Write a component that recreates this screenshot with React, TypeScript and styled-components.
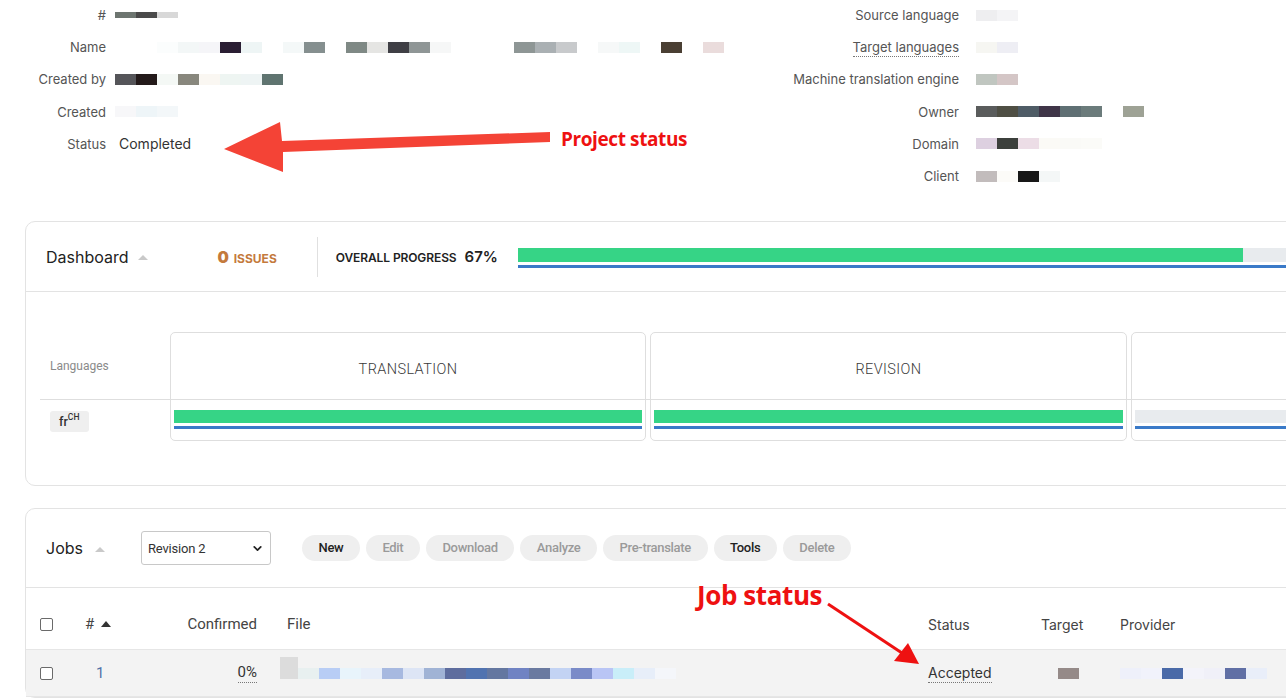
import React from 'react';
import styled, { createGlobalStyle } from 'styled-components';
import { ChevronDown } from 'lucide-react';

const GlobalStyle = createGlobalStyle`
  html, body {
    margin: 0;
    padding: 0;
    background: #fff;
    overflow: hidden;
  }
  body {
    font-family: Inter, "Noto Sans", sans-serif;
    color: #333;
  }
`;

interface PixelsProps {
  colors: string[];
  w?: number;
  h?: number;
}

// censored values in the screenshot, drawn as a strip of flat blocks
function Pixels({ colors, w = 21, h = 11 }: PixelsProps) {
  return (
    <StyledPixels>
      {colors.map((c, i) => (
        <StyledPixel key={i} $c={c} $w={w} $h={h} />
      ))}
    </StyledPixels>
  );
}

const leftInfo: { label: string; colors?: string[]; h?: number; text?: string }[] = [
  { label: '#', colors: ['#6d7570', '#4a4a4a', '#d8d8d8'], h: 6 },
  {
    label: 'Name',
    colors: ['#fff', '#fff', '#fbfdfd', '#f3f7f7', '#f5f5f8', '#2a1e33', '#eef5f5', '#fff', '#f4f8f8', '#858f8f', '#fff', '#7f8985', '#e5e5e3', '#3f3f45', '#8f9696', '#f6f7f7', '#fff', '#fff', '#fff', '#8e9695', '#aab0b3', '#c8cacc', '#fff', '#f6f8f8', '#eef7f6', '#fff', '#4a3f33', '#fff', '#eadcdc'],
  },
  { label: 'Created by', colors: ['#555559', '#231a1a', '#f4f8f5', '#88877d', '#faf7f2', '#eef5f2', '#eef4f4', '#5f7470'] },
  { label: 'Created', colors: ['#f7f7f9', '#eef5f8', '#f3f7f9'] },
  { label: 'Status', text: 'Completed' },
];

const rightInfo: { label: string; colors: string[]; dotted?: boolean }[] = [
  { label: 'Source language', colors: ['#eeeef0', '#f4f4f6'] },
  { label: 'Target languages', colors: ['#f6f6f2', '#eeeef4'], dotted: true },
  { label: 'Machine translation engine', colors: ['#c0c6c0', '#d4c6c6'] },
  { label: 'Owner', colors: ['#5a5c5c', '#4f4f44', '#4f5c66', '#3f3548', '#5f6f73', '#6b7b7b', '#fff', '#9ea295'] },
  { label: 'Domain', colors: ['#ddd0e0', '#3c403c', '#ecdde6', '#fbfaf6', '#fafaf7', '#fbfbf8'] },
  { label: 'Client', colors: ['#c2bcbc', '#fcfbf8', '#181818', '#f4f7f7'] },
];

const stages = ['TRANSLATION', 'REVISION', ''];

const buttons: { label: string; active: boolean }[] = [
  { label: 'New', active: true },
  { label: 'Edit', active: false },
  { label: 'Download', active: false },
  { label: 'Analyze', active: false },
  { label: 'Pre-translate', active: false },
  { label: 'Tools', active: true },
  { label: 'Delete', active: false },
];

const fileColors = ['#e8f0f0', '#b8cdf5', '#e8f4fb', '#e7eef9', '#a7b9e0', '#dde5f5', '#a0b3d5', '#5e6d9e', '#5173b0', '#6477a0', '#7083c3', '#6a7aa0', '#c3d3f3', '#7a8bc8', '#b9c5f5', '#c9eef9', '#e7eef9', '#f4f6fa'];
const providerColors = ['#eef0fa', '#f1f2fb', '#4a6aa8', '#f3f3fa', '#f0f0f8', '#606fa5', '#e9eef9'];

export default function App() {
  return (
    <StyledPage>
      <GlobalStyle />

      <StyledTop>
        <StyledInfoLeft>
          {leftInfo.map((row) => (
            <React.Fragment key={row.label}>
              <StyledLabel>{row.label}</StyledLabel>
              {row.text ? (
                <StyledValue>{row.text}</StyledValue>
              ) : (
                <Pixels colors={row.colors || []} h={row.h} />
              )}
            </React.Fragment>
          ))}
        </StyledInfoLeft>
        <StyledInfoRight>
          {rightInfo.map((row) => (
            <React.Fragment key={row.label}>
              <StyledLabel>
                {row.dotted ? <StyledDotted>{row.label}</StyledDotted> : row.label}
              </StyledLabel>
              <Pixels colors={row.colors} />
            </React.Fragment>
          ))}
        </StyledInfoRight>
      </StyledTop>

      <StyledCard>
        <StyledDashHeader>
          <StyledCardTitle>Dashboard</StyledCardTitle>
          <StyledCaret $gap={9} />
          <StyledIssues>
            <b>0</b> ISSUES
          </StyledIssues>
          <StyledVDivider />
          <StyledOverall>OVERALL PROGRESS</StyledOverall>
          <StyledPercent>67%</StyledPercent>
          <StyledProgress>
            <StyledTrack $height={14}>
              <StyledFill style={{ width: 725 }} />
            </StyledTrack>
            <StyledBlueLine />
          </StyledProgress>
        </StyledDashHeader>

        <StyledDashBody>
          <StyledStageGrid>
            <StyledLangColumn>
              <StyledLangHead>Languages</StyledLangHead>
              <StyledLangRow>
                <StyledLangTag>
                  fr<sup>CH</sup>
                </StyledLangTag>
              </StyledLangRow>
            </StyledLangColumn>
            {stages.map((s, i) => (
              <StyledStage key={i}>
                <StyledStageHead>{s}</StyledStageHead>
                <StyledStageBars>
                  <StyledTrack $height={13}>
                    <StyledFill style={{ width: s ? '100%' : '0%' }} />
                  </StyledTrack>
                  <StyledBlueLine />
                </StyledStageBars>
              </StyledStage>
            ))}
          </StyledStageGrid>
        </StyledDashBody>
      </StyledCard>

      <StyledJobsCard>
        <StyledJobsHeader>
          <StyledCardTitle>Jobs</StyledCardTitle>
          <StyledCaret $gap={12} />
          <StyledSelect>
            Revision 2
            <ChevronDown size={13} strokeWidth={3.2} color="#222" />
          </StyledSelect>
          <StyledToolbar>
            {buttons.map((b) => (
              <StyledPill key={b.label} $active={b.active}>
                {b.label}
              </StyledPill>
            ))}
          </StyledToolbar>
        </StyledJobsHeader>

        <StyledHeadRow>
          <StyledCell>
            <StyledCheck />
          </StyledCell>
          <StyledCell $condensed>
            # <StyledSortCaret />
          </StyledCell>
          <StyledCell $condensed $right>
            Confirmed
          </StyledCell>
          <StyledCell $condensed $pad={30}>
            File
          </StyledCell>
          <StyledCell>Status</StyledCell>
          <StyledCell>Target</StyledCell>
          <StyledCell>Provider</StyledCell>
        </StyledHeadRow>

        <StyledJobRow>
          <StyledCell>
            <StyledCheck />
          </StyledCell>
          <StyledCell $condensed $pad={11}>
            <StyledLink>1</StyledLink>
          </StyledCell>
          <StyledCell $condensed $right>
            <StyledDotted>0%</StyledDotted>
          </StyledCell>
          <StyledCell $pad={23}>
            <StyledFileThumb />
            <Pixels colors={fileColors} />
          </StyledCell>
          <StyledCell>
            <StyledDotted>Accepted</StyledDotted>
          </StyledCell>
          <StyledCell $pad={17}>
            <Pixels colors={['#958a88']} />
          </StyledCell>
          <StyledCell>
            <Pixels colors={providerColors} />
          </StyledCell>
        </StyledJobRow>
      </StyledJobsCard>

      <StyledOverlay width={1286} height={700} viewBox="0 0 1286 700">
        <polygon
          points="224,150 280,123 282,142 550,133 550,143 283,153 283,173"
          fill="#f44336"
        />
        <line x1={828} y1={605} x2={905} y2={656} stroke="#ee1111" strokeWidth={3} />
        <polygon points="919,665 894,662 908,644" fill="#ee1111" />
      </StyledOverlay>
      <StyledNote $x={561} $y={127} $size={19}>
        Project status
      </StyledNote>
      <StyledNote $x={697} $y={578} $size={26}>
        Job status
      </StyledNote>
    </StyledPage>
  );
}

const StyledPage = styled.div`
  position: relative;
  width: 1640px;
  height: 700px;
`;

const StyledTop = styled.div`
  display: flex;
  margin-top: -1px;
`;

const StyledInfoLeft = styled.div`
  width: 780px;
  display: grid;
  grid-template-columns: 106px 1fr;
  grid-auto-rows: 32.2px;
  column-gap: 9px;
  align-items: center;
  align-content: start;
`;

const StyledInfoRight = styled.div`
  display: grid;
  grid-template-columns: 179px 1fr;
  grid-auto-rows: 32.2px;
  column-gap: 17px;
  align-items: center;
  align-content: start;
`;

const StyledLabel = styled.div`
  text-align: right;
  font-size: 13px;
  color: #555;
`;

const StyledValue = styled.div`
  font-size: 14px;
  color: #333;
  padding-left: 4px;
`;

const StyledDotted = styled.span`
  border-bottom: 1px dotted #777;
  padding-bottom: 1px;
`;

const StyledPixels = styled.div`
  display: flex;
  align-items: center;
`;

const StyledPixel = styled.span<{ $c: string; $w: number; $h: number }>`
  display: block;
  width: ${(p) => p.$w}px;
  height: ${(p) => p.$h}px;
  background: ${(p) => p.$c};
`;

const StyledCard = styled.div`
  margin: 29px 0 0 25px;
  border: 1px solid #e3e3e3;
  border-radius: 10px;
  background: #fff;
`;

const StyledDashHeader = styled.div`
  display: flex;
  align-items: center;
  height: 69px;
  padding: 0 20px;
  border-bottom: 1px solid #e3e3e3;
`;

const StyledCardTitle = styled.div`
  font-size: 16px;
  color: #222;
`;

const StyledCaret = styled.span<{ $gap: number }>`
  width: 0;
  height: 0;
  margin: 2px 0 0 ${(p) => p.$gap}px;
  border-left: 5px solid transparent;
  border-right: 5px solid transparent;
  border-bottom: 5px solid #c9c9c9;
`;

const StyledIssues = styled.div`
  margin-left: 70px;
  color: #c47a3c;
  font-size: 12px;
  font-weight: 700;

  b {
    font-size: 16px;
    margin-right: 2px;
  }
`;

const StyledVDivider = styled.div`
  width: 1px;
  height: 40px;
  background: #e0e0e0;
  margin-left: 40px;
`;

const StyledOverall = styled.div`
  margin-left: 18px;
  margin-top: 2px;
  font-size: 12px;
  font-weight: 600;
  color: #222;
  letter-spacing: -0.1px;
`;

const StyledPercent = styled.div`
  margin-left: 8px;
  font-size: 15px;
  font-weight: 600;
  color: #222;
`;

const StyledProgress = styled.div`
  flex: 1;
  margin-left: 20px;
  margin-top: 2px;
`;

const StyledTrack = styled.div<{ $height: number }>`
  height: ${(p) => p.$height}px;
  background: #e8ebee;
`;

const StyledFill = styled.div`
  height: 100%;
  background: #36d486;
`;

const StyledBlueLine = styled.div`
  height: 3px;
  margin-top: 3px;
  background: #3a7ac8;
`;

const StyledDashBody = styled.div`
  padding: 40px 0 44px 14px;
`;

const StyledStageGrid = styled.div`
  display: grid;
  grid-template-columns: 126px 476px 477px 476px;
  column-gap: 4px;
  background: linear-gradient(#dedede, #dedede) no-repeat 0 67px / 100% 1px;
`;

const StyledLangColumn = styled.div`
  display: grid;
  grid-template-rows: 67px 1fr;
`;

const StyledLangHead = styled.div`
  display: flex;
  align-items: center;
  padding-left: 10px;
  font-family: Roboto, sans-serif;
  font-size: 12px;
  color: #8a8a8a;
`;

const StyledLangRow = styled.div`
  display: flex;
  align-items: center;
  padding: 3px 0 0 10px;
`;

const StyledLangTag = styled.span`
  display: inline-flex;
  align-items: flex-start;
  padding: 3px 10px 3px 9px;
  border-radius: 3px;
  background: #efefef;
  font-family: Roboto, sans-serif;
  font-size: 12.5px;
  font-weight: 500;
  color: #333;

  sup {
    font-size: 8.5px;
    line-height: 1;
    margin-top: -1px;
  }
`;

const StyledStage = styled.div`
  display: grid;
  grid-template-rows: 66px 1fr;
  height: 107px;
  border: 1px solid #dedede;
  border-radius: 5px;
`;

const StyledStageHead = styled.div`
  display: flex;
  align-items: center;
  justify-content: center;
  padding-top: 7px;
  font-family: Roboto, sans-serif;
  font-size: 14.5px;
  font-weight: 300;
  color: #3a3a3a;
  letter-spacing: 0.4px;
`;

const StyledStageBars = styled.div`
  padding: 11px 3px 0;
`;

const StyledJobsCard = styled(StyledCard)`
  margin-top: 22px;
`;

const StyledJobsHeader = styled.div`
  display: flex;
  align-items: center;
  height: 78px;
  padding: 0 20px;
  border-bottom: 1px solid #e3e3e3;
`;

const StyledSelect = styled.div`
  display: flex;
  align-items: center;
  justify-content: space-between;
  box-sizing: border-box;
  width: 130px;
  height: 34px;
  margin-left: 36px;
  padding: 0 6px;
  border: 1px solid #c8c8c8;
  border-radius: 3px;
  font-family: Roboto, sans-serif;
  font-size: 13px;
  color: #333;
  letter-spacing: -0.2px;
`;

const StyledToolbar = styled.div`
  display: flex;
  gap: 6px;
  margin-left: 31px;
`;

const StyledPill = styled.div<{ $active: boolean }>`
  height: 26px;
  line-height: 26px;
  padding: 0 16.5px;
  border-radius: 13px;
  background: #efefef;
  font-family: Roboto, sans-serif;
  font-size: 13px;
  font-weight: 500;
  letter-spacing: -0.3px;
  color: ${(p) => (p.$active ? '#222' : '#9a9a9a')};
`;

const StyledHeadRow = styled.div`
  display: grid;
  grid-template-columns: 45px 60px 112px 671px 113px 79px 1fr;
  align-items: center;
  box-sizing: border-box;
  height: 62px;
  padding: 11px 14px 0;
  border-bottom: 1px solid #e6e6e6;
  font-size: 14px;
  color: #444;
`;

const StyledJobRow = styled(StyledHeadRow)`
  height: 47px;
  padding-top: 0;
  background: #f3f3f3;
  color: #333;
`;

const StyledCell = styled.div<{ $right?: boolean; $pad?: number; $condensed?: boolean }>`
  display: flex;
  align-items: center;
  justify-content: ${(p) => (p.$right ? 'flex-end' : 'flex-start')};
  padding-left: ${(p) => p.$pad || 0}px;
  font-family: ${(p) => (p.$condensed ? 'Roboto, sans-serif' : 'Inter, sans-serif')};
  font-size: ${(p) => (p.$condensed ? 15 : 14)}px;
`;

const StyledCheck = styled.span`
  box-sizing: border-box;
  width: 13px;
  height: 13px;
  border: 1px solid #6a6a6a;
  border-radius: 2px;
  background: #fff;
`;

const StyledSortCaret = styled.span`
  width: 0;
  height: 0;
  margin-left: 7px;
  border-left: 5px solid transparent;
  border-right: 5px solid transparent;
  border-bottom: 6px solid #333;
`;

const StyledLink = styled.span`
  color: #4f72a8;
`;

const StyledFileThumb = styled.span`
  width: 18px;
  height: 22px;
  margin-top: -10px;
  background: #dcdcdc;
`;

const StyledOverlay = styled.svg`
  position: absolute;
  left: 0;
  top: 0;
  pointer-events: none;
`;

const StyledNote = styled.div<{ $x: number; $y: number; $size: number }>`
  position: absolute;
  left: ${(p) => p.$x}px;
  top: ${(p) => p.$y}px;
  font-family: "Open Sans", "Noto Sans", sans-serif;
  font-size: ${(p) => p.$size}px;
  font-weight: 700;
  letter-spacing: -0.4px;
  color: #ee1111;
  white-space: nowrap;
`;
